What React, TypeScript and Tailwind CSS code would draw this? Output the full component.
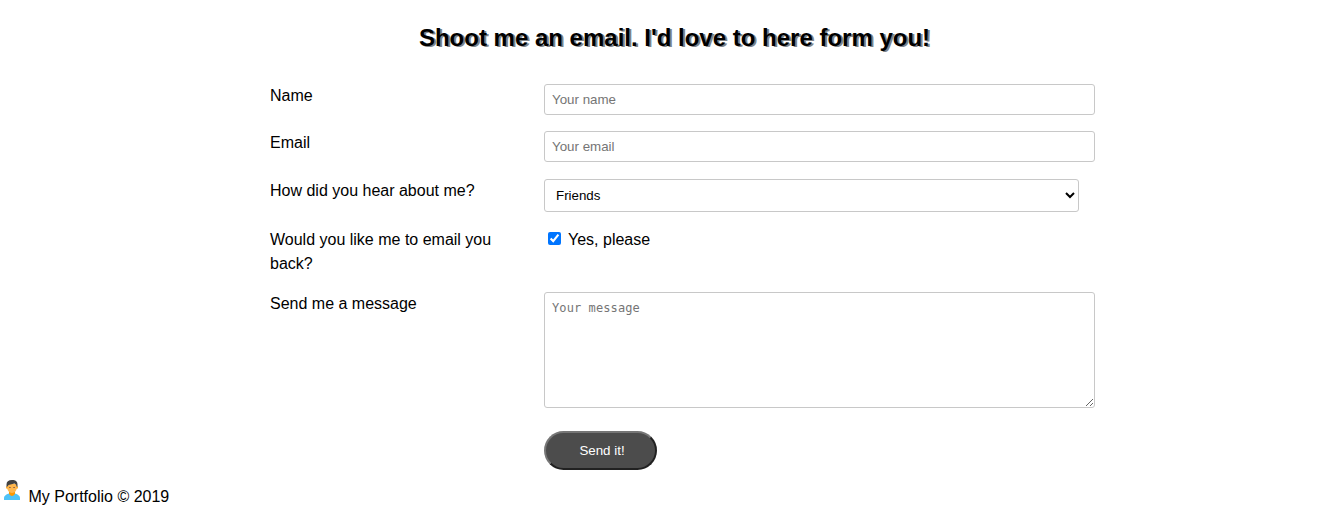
export default function App() {
  const label = "w-[274px] shrink-0 pr-6";
  const field = "w-[551px] rounded-[3px] border border-[#c8c8c8] bg-white px-[7px] placeholder:text-[#757575]";
  return (
    <div className="h-[505px] overflow-hidden bg-white font-['Liberation_Sans',Arial,sans-serif] text-base leading-6 text-black">
      <h2 className="pt-[20px] pl-[10px] text-center text-2xl leading-9 font-bold [text-shadow:2px_1px_0_#808488]">Shoot me an email. I'd love to here form you!</h2>
      <form className="ml-[270px] flex w-[825px] flex-col pt-[28px]">
        <div className="flex h-[47px]">
          <label className={label} htmlFor="name">Name</label>
          <input id="name" placeholder="Your name" className={`${field} h-[31px] text-[13.333px]`} />
        </div>
        <div className="flex h-[48px]">
          <label className={label} htmlFor="email">Email</label>
          <input id="email" type="email" placeholder="Your email" className={`${field} h-[31px] text-[13.333px]`} />
        </div>
        <div className="flex h-[49px]">
          <label className={label} htmlFor="source">How did you hear about me?</label>
          <select id="source" className="h-[33px] w-[535px] rounded-[3px] border border-[#c8c8c8] bg-white pr-0 pl-[7px] text-[13.333px]">
            <option>Friends</option>
          </select>
        </div>
        <div className="flex h-[64px]">
          <span className={label}>Would you like me to email you back?</span>
          <label className="flex h-[24px] items-start">
            <input type="checkbox" defaultChecked className="mt-1 mr-[7px] ml-1 size-[13px]" />
            Yes, please
          </label>
        </div>
        <div className="flex h-[139px]">
          <label className={label} htmlFor="message">Send me a message</label>
          <textarea id="message" placeholder="Your message" className={`${field} h-[116px] py-[7px] font-['DejaVu_Sans_Mono',monospace] text-[12px] leading-4 tracking-[0.1px]`} />
        </div>
        <button type="button" className="ml-[274px] h-[39px] w-[113px] rounded-[20px] border-2 border-[#767676] bg-[#4c4c4c] pl-[3px] text-[13.333px] text-white [border-style:outset]">Send it!</button>
      </form>
      <footer className="flex pt-[10px] pl-1">
        <svg className="mr-[8.5px] h-[20px] w-[16px]" viewBox="0 0 16 20">
          <path fill="#4fc3f7" d="M0 20v-2q0-3 5-4.500h6q5 1.500 5 4.500v2z" />
          <path fill="#ff9800" d="M5 11h6v3q-3 4-6 0z" />
          <circle cx="3.200" cy="7.500" r="1.200" fill="#ffa726" />
          <circle cx="12.800" cy="7.500" r="1.200" fill="#ffa726" />
          <path fill="#ffb74d" d="M3.200 4h9.600v4.500q-.8 4-4.800 4.500-4-.5-4.800-4.500z" />
          <path fill="#424242" d="M2.500 7V4.500Q2.500 0 8 0h1.500q4 .5 4 4.500V7l-1.200-.8V4.800L10.500 3.500 4.500 5l-.8 1.200z" />
          <path stroke="#795548" strokeWidth=".8" d="M5 7.500h1.800m2.400 0H11" />
        </svg>
        <span className="pt-[5px]">My Portfolio © 2019</span>
      </footer>
    </div>
  );
}
